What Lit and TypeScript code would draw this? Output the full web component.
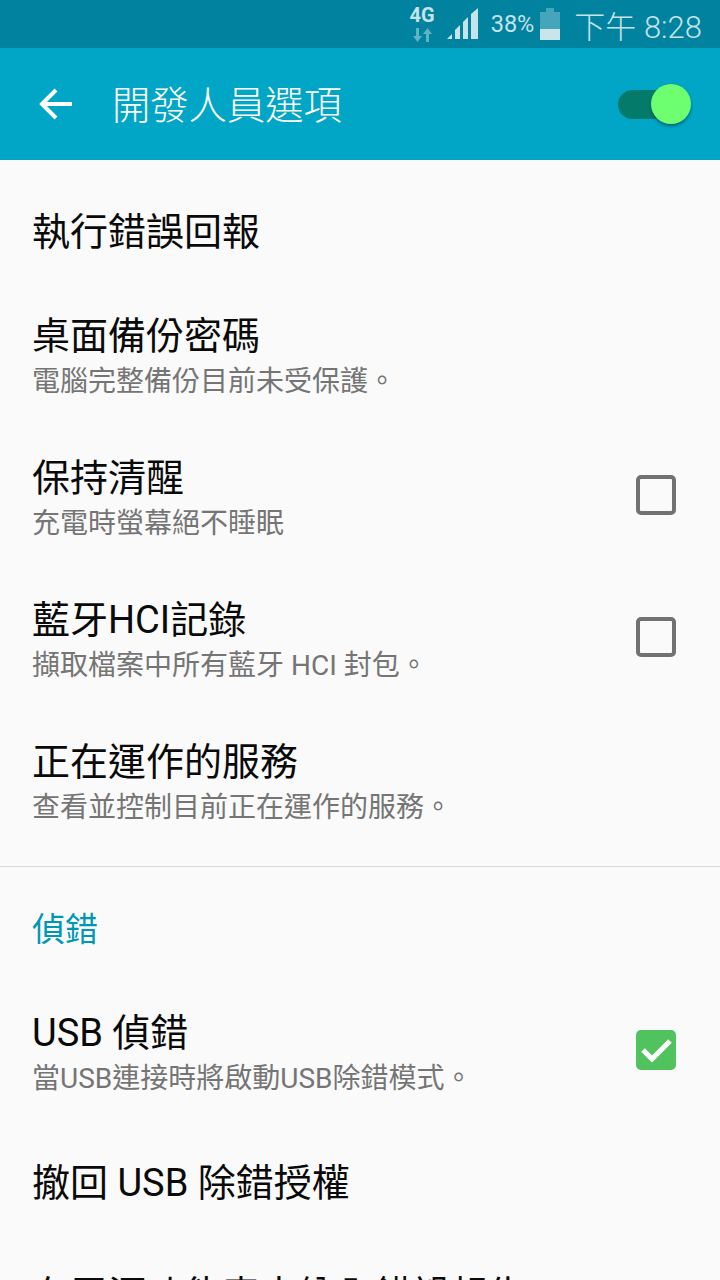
import { LitElement, html, css } from 'lit';
import { customElement } from 'lit/decorators.js';

type Row = { title: string; sub?: string; box?: 'off' | 'on' };

const topRows: Row[] = [
  { title: '執行錯誤回報' },
  { title: '桌面備份密碼', sub: '電腦完整備份目前未受保護。' },
  { title: '保持清醒', sub: '充電時螢幕絕不睡眠', box: 'off' },
  { title: '藍牙HCI記錄', sub: '擷取檔案中所有藍牙 HCI 封包。', box: 'off' },
  { title: '正在運作的服務', sub: '查看並控制目前正在運作的服務。' },
];

const debugRows: Row[] = [
  { title: 'USB 偵錯', sub: '當USB連接時將啟動USB除錯模式。', box: 'on' },
  { title: '撤回 USB 除錯授權' },
  { title: '在電源功能表中納入錯誤報告' },
];

@customElement('app-root')
export class AppRoot extends LitElement {
  static styles = css`
    :host {
      display: block;
      width: 720px;
      height: 1280px;
      overflow: hidden;
      background: #fafafa;
      font-family: Roboto, 'Noto Sans CJK TC', sans-serif;
    }
    .status {
      height: 48px;
      background: #01829f;
      display: flex;
      align-items: center;
      justify-content: flex-end;
      padding-right: 18px;
      color: #c4e3ea;
    }
    .net {
      width: 28px;
      height: 44px;
      margin-right: 9px;
    }
    .signal {
      width: 34px;
      height: 34px;
      margin-right: 11px;
    }
    .pct {
      font-size: 23.5px;
      margin-right: 6px;
    }
    .battery {
      width: 20px;
      height: 32px;
      margin-right: 14px;
    }
    .clock {
      font-size: 31px;
      font-weight: 300;
    }
    .appbar {
      height: 112px;
      background: #01a5c5;
      display: flex;
      align-items: center;
      color: #fff;
    }
    .back {
      width: 34px;
      height: 34px;
      margin-left: 39px;
    }
    .heading {
      font-size: 38.3px;
      font-weight: 300;
      margin: 0 0 4px 39px;
      flex: 1;
    }
    .switch {
      position: relative;
      width: 66px;
      height: 29px;
      margin-right: 36px;
      border-radius: 15px;
      background: #047a6b;
    }
    .knob {
      position: absolute;
      right: -7px;
      top: -6px;
      width: 40px;
      height: 40px;
      border-radius: 50%;
      background: #6dff70;
      box-shadow: 0 2px 3px rgba(0, 50, 60, 0.55);
    }
    .list {
      padding-top: 14px;
    }
    .row {
      display: flex;
      align-items: center;
      min-height: 112px;
      padding: 0 44px 0 32px;
      box-sizing: border-box;
    }
    .row.two {
      height: 142px;
    }
    .text {
      flex: 1;
      padding-top: 3px;
    }
    .title {
      font-size: 38px;
      line-height: 44px;
      color: #0a0a0a;
      font-weight: 400;
    }
    .sub {
      margin-top: 2px;
      font-size: 28px;
      line-height: 44px;
      color: #757575;
    }
    .box {
      width: 40px;
      height: 40px;
      margin-bottom: 8px;
      box-sizing: border-box;
      border: 4px solid #727272;
      border-radius: 5px;
    }
    .box.on {
      border: 0;
      background: #50c35e;
    }
    .box svg {
      display: block;
      width: 40px;
      height: 40px;
    }
    .divider {
      height: 1px;
      margin-top: 12px;
      background: #d9d9d9;
    }
    .category {
      height: 116px;
      box-sizing: border-box;
      padding: 4px 0 0 32px;
      display: flex;
      align-items: center;
      font-size: 33px;
      color: #0097b7;
    }
  `;

  renderRow(r: Row) {
    return html`
      <div class="row ${r.sub ? 'two' : ''}">
        <div class="text">
          <div class="title">${r.title}</div>
          ${r.sub ? html`<div class="sub">${r.sub}</div>` : ''}
        </div>
        ${r.box === 'off' ? html`<div class="box"></div>` : ''}
        ${r.box === 'on'
          ? html`<div class="box on">
              <svg viewBox="0 0 40 40">
                <path d="M7 20 L16 29 L34 11" fill="none" stroke="#fff" stroke-width="5" />
              </svg>
            </div>`
          : ''}
      </div>
    `;
  }

  render() {
    return html`
      <div class="status">
        <svg class="net" viewBox="0 0 28 44">
          <text x="13" y="20" text-anchor="middle" font-size="20" font-weight="700" fill="#c4e3ea" font-family="Roboto">4G</text>
          <path d="M8.5 40 L4 34 H7 V26 H10 V34 H13 Z" fill="#5fb3c6" />
          <path d="M18.5 26 L23 32 H20 V40 H17 V32 H14 Z" fill="#5fb3c6" />
        </svg>
        <svg class="signal" viewBox="0 0 34 34">
          <path d="M1 32 L6 27 V32 Z" fill="#c4e3ea" />
          <path d="M9 32 V23 L14 18 V32 Z" fill="#c4e3ea" />
          <path d="M17 32 V15 L22 10 V32 Z" fill="#c4e3ea" />
          <path d="M25 32 V7 L32 1 V32 Z" fill="#c4e3ea" />
        </svg>
        <span class="pct">38%</span>
        <svg class="battery" viewBox="0 0 20 32">
          <path d="M6 0 H14 V4 H20 V32 H0 V4 H6 Z" fill="#45a5bb" />
          <rect x="0" y="21" width="20" height="11" fill="#c9e5eb" />
        </svg>
        <span class="clock">下午 8:28</span>
      </div>
      <div class="appbar">
        <svg class="back" viewBox="0 0 34 34">
          <path d="M33 17 H4 M17 3 L3 17 L17 31" fill="none" stroke="#fff" stroke-width="4" />
        </svg>
        <div class="heading">開發人員選項</div>
        <div class="switch"><div class="knob"></div></div>
      </div>
      <div class="list">
        ${topRows.map((r) => this.renderRow(r))}
        <div class="divider"></div>
        <div class="category">偵錯</div>
        ${debugRows.map((r) => this.renderRow(r))}
      </div>
    `;
  }
}
